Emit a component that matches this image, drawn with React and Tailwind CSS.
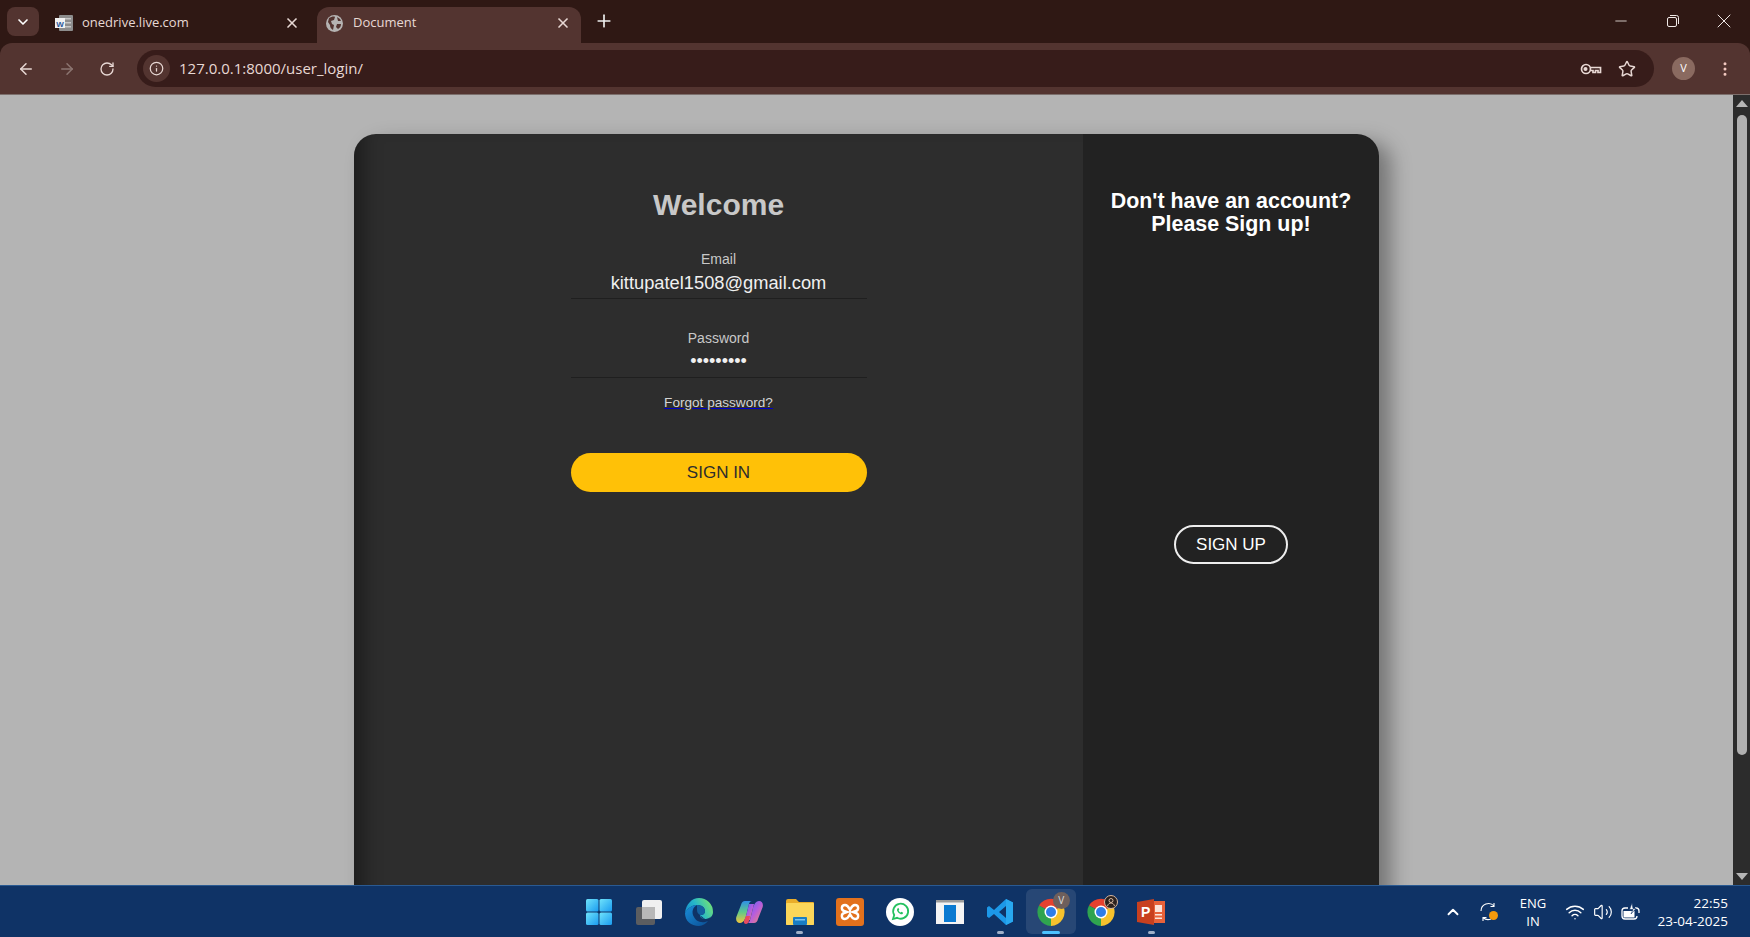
import { ArrowLeft, ArrowRight, ChevronDown, ChevronUp, EllipsisVertical, Info, Minus, Plus, RotateCw, Star, Volume2, Wifi, X } from "lucide-react";

const WindowsIcon = () => (
  <svg width="28" height="28" viewBox="0 0 28 28">
    <defs>
      <linearGradient id="win" x1="0" y1="0" x2="1" y2="1">
        <stop offset="0" stopColor="#6fe3fb" />
        <stop offset="1" stopColor="#1a9cf0" />
      </linearGradient>
    </defs>
    <rect x="1" y="1" width="12.500" height="12.500" rx="1.500" fill="url(#win)" />
    <rect x="14.500" y="1" width="12.500" height="12.500" rx="1.500" fill="url(#win)" />
    <rect x="1" y="14.500" width="12.500" height="12.500" rx="1.500" fill="url(#win)" />
    <rect x="14.500" y="14.500" width="12.500" height="12.500" rx="1.500" fill="url(#win)" />
  </svg>
);

const TaskViewIcon = () => (
  <svg width="28" height="28" viewBox="0 0 28 28">
    <rect x="1" y="9" width="19" height="18" rx="2" fill="#5b5d60" />
    <rect x="7" y="2" width="20" height="19" rx="2" fill="#f0f0f0" />
    <rect x="7" y="9" width="13" height="12" fill="#b8b8b8" />
  </svg>
);

const EdgeIcon = () => (
  <svg width="28" height="28" viewBox="0 0 28 28">
    <defs>
      <linearGradient id="edgeTop" x1="0" y1="0.800" x2="1" y2="0.400">
        <stop offset="0" stopColor="#1288d0" />
        <stop offset="0.500" stopColor="#27b8c8" />
        <stop offset="1" stopColor="#6fe078" />
      </linearGradient>
      <linearGradient id="edgeLow" x1="0" y1="0" x2="1" y2="1">
        <stop offset="0" stopColor="#1a8fdb" />
        <stop offset="1" stopColor="#0b4f94" />
      </linearGradient>
    </defs>
    <path d="M14 0a14 14 0 0 1 14 14c0 4-3 7-7 7-3 0-6-1-6-4 3 0 5-1 5-4 0-4-4-6-8-6-5 0-9 3-12 8C1 6 7 0 14 0z" fill="url(#edgeTop)" />
    <path d="M0 15C3 10 7 7 12 7c-4 2-6 7-3 12 2 4 7 7 14 4a14 14 0 0 1-9 5C6 28 0 23 0 15z" fill="url(#edgeLow)" />
    <path d="M12 7c4 0 8 2 8 6 0 3-2 4-5 4-2-1-3-3-3-5 0-2 0-3 0-5z" fill="#14609f" />
    <path d="M15 17c2 2 5 4 8 6l3-5c-1 2-3 3-5 3-3 0-5-1-6-4z" fill="#0f3366" />
  </svg>
);

const CopilotIcon = () => (
  <svg width="27" height="26" viewBox="0 0 27 26">
    <defs>
      <linearGradient id="copLeft" x1="0" y1="0" x2="0" y2="1">
        <stop offset="0" stopColor="#2f8fe8" />
        <stop offset="0.500" stopColor="#5ec98a" />
        <stop offset="1" stopColor="#f2c53a" />
      </linearGradient>
      <linearGradient id="copRight" x1="0" y1="0" x2="1" y2="1">
        <stop offset="0" stopColor="#4a6cf0" />
        <stop offset="0.500" stopColor="#b45ce0" />
        <stop offset="1" stopColor="#f98a6c" />
      </linearGradient>
    </defs>
    <path d="M9 2h7c-1.500 0-2.500 1-3 3l-3 12c-.7 3-2.500 7-6 7-3 0-4.500-2.500-3.700-6L5 6c.6-2.500 2-4 4-4z" fill="url(#copLeft)" />
    <path d="M18 24h-7c1.500 0 2.500-1 3-3l3-12c.7-3 2.500-7 6-7 3 0 4.500 2.500 3.700 6L22 20c-.6 2.500-2 4-4 4z" fill="url(#copRight)" />
    <path d="M13 5h5l-4 16H9z" fill="url(#copRight)" />
    <path d="M10 17h4l-1 5c-.5 2-2 3-3 3-1.500 0-2.500-1-2-3z" fill="#e84a5f" />
  </svg>
);

const FolderIcon = () => (
  <svg width="30" height="28" viewBox="0 0 30 28">
    <path d="M1 3a2 2 0 0 1 2-2h8l3 3h14a1 1 0 0 1 1 1v21a1 1 0 0 1-1 1H2a1 1 0 0 1-1-1z" fill="#e9ad2a" />
    <rect x="1" y="5" width="28" height="22" rx="1" fill="#fbd65a" />
    <rect x="8" y="19" width="14" height="8" rx="1" fill="#1a7dc4" />
    <rect x="10" y="21" width="10" height="1.500" fill="#7cc4ef" />
  </svg>
);

const XamppIcon = () => (
  <svg width="28" height="28" viewBox="0 0 28 28">
    <rect width="28" height="28" rx="3" fill="#e2711d" />
    <path d="M9 7c-4 0-4 5-1 6l3 1-3 1c-3 1-3 6 1 6 3 0 4-3 5-5 1 2 2 5 5 5 4 0 4-5 1-6l-3-1 3-1c3-1 3-6-1-6-3 0-4 3-5 5-1-2-2-5-5-5z" fill="none" stroke="#fff" strokeWidth="2.400" />
  </svg>
);

const WhatsappIcon = () => (
  <svg width="28" height="28" viewBox="0 0 28 28">
    <circle cx="14" cy="14" r="14" fill="#fff" />
    <path d="M7 21l1.200-4a7.500 7.500 0 1 1 2.900 2.800z" fill="none" stroke="#25c15f" strokeWidth="1.800" />
    <path d="M11.500 10.500c-1 1-.5 2.800 1 4.200s3.200 2 4.200 1l.5-1-1.800-1-.8.7c-.8-.3-1.700-1.200-2-2l.7-.8-1-1.800z" fill="#25c15f" />
  </svg>
);

const StoreIcon = () => (
  <svg width="28" height="24" viewBox="0 0 28 24">
    <rect width="28" height="24" fill="#f4f4f4" />
    <rect width="28" height="2.500" fill="#9b9b9b" />
    <rect x="8" y="5" width="12" height="17" fill="#0b7ad1" />
  </svg>
);

const VscodeIcon = () => (
  <svg width="28" height="28" viewBox="0 0 28 28">
    <path d="M20 1l7 3.500v19L20 27 8 16l-5 4-2-1.500V9.500L3 8l5 4zM20 8l-7 6 7 6z" fill="#1c98e8" />
    <path d="M20 1l7 3.500v19L20 27z" fill="#28a8f0" />
  </svg>
);

const ChromeIcon = () => (
  <svg width="28" height="28" viewBox="0 0 28 28">
    <path d="M14 14L2 7.500A14 14 0 0 1 26 7.500z" fill="#e5412f" />
    <path d="M14 14L26 7.500A14 14 0 0 1 14 28z" fill="#f6c22d" />
    <path d="M14 14L14 28A14 14 0 0 1 2 7.500z" fill="#2fa44f" />
    <circle cx="14" cy="14" r="6.500" fill="#fff" />
    <circle cx="14" cy="14" r="5" fill="#2f7de8" />
  </svg>
);

const ChromeProfileIcon = () => (
  <span className="relative flex">
    <ChromeIcon />
    <svg className="absolute -top-[3px] -right-[3px]" width="14" height="14" viewBox="0 0 14 14" fill="none" stroke="#d8b8a0" strokeWidth="1">
      <circle cx="7" cy="7" r="6.500" fill="#2a211e" />
      <circle cx="7" cy="5.500" r="2" />
      <path d="M3.500 11c.5-2 2-3 3.500-3s3 1 3.500 3" />
    </svg>
  </span>
);

const PowerpointIcon = () => (
  <svg width="28" height="28" viewBox="0 0 28 28">
    <rect x="12" y="3" width="16" height="22" fill="#e8623a" />
    <rect x="18" y="7" width="7" height="7" fill="#fbe3da" />
    <rect x="18" y="16" width="7" height="1.500" fill="#fbe3da" />
    <rect x="18" y="19.500" width="7" height="1.500" fill="#fbe3da" />
    <path d="M0 4l17-3v26L0 24z" fill="#c8401f" />
    <text x="4" y="19" fontSize="14" fontWeight="700" fill="#fff" fontFamily="Liberation Sans, sans-serif">P</text>
  </svg>
);

const WordFavicon = () => (
  <svg width="18" height="16" viewBox="0 0 18 16">
    <rect x="4" y="0" width="14" height="16" rx="1" fill="#8d8d8d" />
    <rect x="10" y="3" width="6" height="1.500" fill="#c8c8c8" />
    <rect x="10" y="7" width="6" height="1.500" fill="#c8c8c8" />
    <rect x="10" y="11" width="6" height="1.500" fill="#c8c8c8" />
    <rect x="0" y="3" width="10" height="10" fill="#f2f2f2" />
    <text x="5" y="11.500" fontSize="8" fontWeight="700" textAnchor="middle" fill="#2b579a" fontFamily="Liberation Sans, sans-serif">W</text>
  </svg>
);

const GlobeFavicon = () => (
  <svg width="17" height="17" viewBox="0 0 17 17">
    <circle cx="8.500" cy="8.500" r="8.500" fill="#b5b3b2" />
    <path d="M3 3c2-1 5-2 6-1l-1 3-3 1 1 3 2 1-1 5c-2-1-3-3-3-5L2 7z" fill="#533430" />
    <path d="M11 9h4c0 2-1 4-3 5l-2-2z" fill="#533430" />
    <path d="M11 2l3 2 1 2-3 0z" fill="#533430" />
  </svg>
);

const KeyIcon = () => (
  <svg width="22" height="14" viewBox="0 0 22 14" fill="none" stroke="currentColor" strokeWidth="1.700">
    <circle cx="6" cy="7" r="4.500" />
    <circle cx="5.500" cy="7" r="1.200" fill="currentColor" />
    <path d="M10.500 5.500H20.500V10.500H18V8.500H15.500V10.500H13V8.500H10.500" />
  </svg>
);

const RestoreIcon = () => (
  <svg width="12" height="12" viewBox="0 0 12 12" fill="none" stroke="currentColor" strokeWidth="1">
    <rect x="0.500" y="2.500" width="9" height="9" rx="1.500" />
    <path d="M3 0.500h6.500a2 2 0 0 1 2 2V9" />
  </svg>
);

const SyncIcon = () => (
  <svg width="20" height="20" viewBox="0 0 20 20" fill="none" stroke="#fff" strokeWidth="1.100">
    <path d="M2 9a7.500 7.500 0 0 1 13-5M15 1v3.500h-3.500M12 17a7.500 7.500 0 0 1-8-1.500M4 19v-3.500h3.500" />
    <circle cx="14.500" cy="13.500" r="4.500" fill="#f59a0c" stroke="none" />
  </svg>
);

const BatteryIcon = () => (
  <svg width="20" height="18" viewBox="0 0 20 18" fill="none" stroke="#fff" strokeWidth="1.300">
    <path d="M7 5H4a3 3 0 0 0-3 3v5a3 3 0 0 0 3 3h9a3 3 0 0 0 3-3" />
    <path d="M14 5h1a3 3 0 0 1 3 3v2" />
    <rect x="2.500" y="8" width="11" height="6.500" fill="#fff" stroke="none" />
    <path d="M11 0L8.500 6.500H12L10 11L15 5.500H12z" fill="#fff" stroke="#0f3366" strokeWidth="0.600" />
  </svg>
);

const taskbarApps = [
  { id: "windows", icon: <WindowsIcon /> },
  { id: "taskview", icon: <TaskViewIcon /> },
  { id: "edge", icon: <EdgeIcon /> },
  { id: "copilot", icon: <CopilotIcon /> },
  { id: "files", icon: <FolderIcon />, open: true },
  { id: "xampp", icon: <XamppIcon /> },
  { id: "whatsapp", icon: <WhatsappIcon /> },
  { id: "store", icon: <StoreIcon /> },
  { id: "vscode", icon: <VscodeIcon />, open: true },
  { id: "chrome", icon: <ChromeIcon />, active: true },
  { id: "chrome2", icon: <ChromeProfileIcon /> },
  { id: "powerpoint", icon: <PowerpointIcon />, open: true },
];

const TabStrip = () => (
  <div className="h-[43px] bg-[#2f1814] flex items-end pl-[7px] text-[13px] text-[#e8d8d4] font-['Open_Sans',sans-serif]">
    <button className="w-8 h-[29px] mb-[7px] rounded-lg bg-[#533430] flex items-center justify-center">
      <ChevronDown className="size-4 text-white" strokeWidth={2.500} />
    </button>
    <div className="w-[278px] h-9 flex items-center pl-[16px] pr-[17px] pb-[4px] gap-[9px]">
      <WordFavicon />
      <span className="flex-1">onedrive.live.com</span>
      <X className="size-4" strokeWidth={2.500} />
    </div>
    <div className="w-[264px] h-9 bg-[#533430] rounded-t-xl flex items-center pl-[9px] pr-[10px] pb-[4px] gap-[10px]">
      <GlobeFavicon />
      <span className="flex-1">Document</span>
      <X className="size-4" strokeWidth={2.500} />
    </div>
    <Plus className="size-5 mb-[12px] ml-[13px] text-[#eee]" />
    <div className="ml-auto flex items-center h-full pb-[1px] text-[#f0e8e6]">
      <span className="w-[51px] flex justify-center"><Minus className="size-[18px]" strokeWidth={1.100} /></span>
      <span className="w-[53px] flex justify-center"><RestoreIcon /></span>
      <span className="w-[52px] mr-[-1px] pr-[2px] flex justify-center"><X className="size-6" strokeWidth={1} /></span>
    </div>
  </div>
);

const Toolbar = () => (
  <div className="bg-[#2f1814]">
    <div className="h-[52px] bg-[#533430] rounded-t-xl border-b border-[#7c6f6c] flex items-center pl-[17px] text-[#e8d8d4] font-['Open_Sans',sans-serif]">
      <ArrowLeft className="size-[18px]" />
      <ArrowRight className="size-[18px] ml-[23px] text-[#8c7571]" />
      <RotateCw className="size-4 ml-[23px]" />
      <div className="w-[1517px] h-[37px] ml-[22px] rounded-full bg-[#371c1a] flex items-center pl-[6px] pr-[18px]">
        <span className="size-[27px] rounded-full bg-[#533430] flex items-center justify-center">
          <Info className="size-[15px]" />
        </span>
        <span className="ml-[9px] text-[15px] flex-1">127.0.0.1:8000/user_login/</span>
        <KeyIcon />
        <Star className="size-[18px] ml-[16px]" />
      </div>
      <span className="size-[23px] ml-[18px] rounded-full bg-[#8a6a60] text-white text-[11px] flex items-center justify-center">V</span>
      <EllipsisVertical className="size-[18px] ml-[21px] text-[#f2c9c0]" />
    </div>
  </div>
);

const Scrollbar = () => (
  <div className="w-[17px] h-full bg-[#2c2c2c] flex flex-col items-center">
    <span className="mt-[5px] w-0 h-0 border-x-[6px] border-x-transparent border-b-[7px] border-b-[#b5b5b5]" />
    <span className="mt-[8px] w-[10px] h-[640px] rounded-full bg-[#b0b0b0]" />
    <span className="mt-auto mb-[5px] w-0 h-0 border-x-[6px] border-x-transparent border-t-[7px] border-t-[#b5b5b5]" />
  </div>
);

const LoginPanel = () => (
  <div className="w-[729px] bg-[#2d2d2d] pt-[53px] flex flex-col items-center shadow-[inset_22px_0_18px_-12px_rgba(0,0,0,0.35)]">
    <h1 className="text-[30px] leading-9 font-bold text-[#c8c8c8]">Welcome</h1>
    <form className="w-[296px] mt-[28px] flex flex-col items-center">
      <label htmlFor="email" className="text-sm leading-4 text-[#c8c8c8]">Email</label>
      <input
        id="email"
        defaultValue="kittupatel1508@gmail.com"
        className="w-full h-[32px] bg-transparent border-b border-[#1f1f1f] text-center text-[18.300px] text-[#f0f0f0] outline-none"
      />
      <label htmlFor="password" className="mt-[31px] text-sm leading-4 text-[#c8c8c8]">Password</label>
      <input
        id="password"
        type="password"
        defaultValue="123456789"
        className="w-full h-[32px] bg-transparent border-b border-[#1f1f1f] text-center text-lg text-[#f0f0f0] outline-none"
      />
      <a href="#" className="mt-[17px] text-[13.600px] leading-4 text-[#d4d4d4] underline decoration-[#0000c8]">Forgot password?</a>
      <button type="button" className="w-full h-[39px] mt-[42px] rounded-full bg-[#ffc107] text-[17px] text-[#2d2d2d]">SIGN IN</button>
    </form>
  </div>
);

const SignupPanel = () => (
  <div className="flex-1 bg-[#222222] pt-[56px] flex flex-col items-center">
    <h2 className="text-[21.400px] leading-[23px] font-bold text-white text-center">Don't have an account?<br />Please Sign up!</h2>
    <button type="button" className="w-[114px] h-[39px] mt-[289px] rounded-full border-2 border-[#eeeeee] text-[17px] text-white">SIGN UP</button>
  </div>
);

const Taskbar = () => (
  <div className="h-[52px] border-t border-[#2a5a92] bg-[#0f3366] grid grid-cols-[1fr_auto_1fr] items-center text-white font-['Open_Sans',sans-serif]">
    <div />
    <div className="flex">
      {taskbarApps.map((app) => (
        <div key={app.id} className={`relative w-[50.200px] h-[45px] flex items-center justify-center rounded-md ${app.active ? "bg-white/10" : ""}`}>
          {app.icon}
          {app.open && <span className="absolute bottom-0 w-[7px] h-[3px] rounded-full bg-[#9fb0c8]" />}
          {app.active && <span className="absolute bottom-0 w-[18px] h-[3px] rounded-full bg-[#4cc2ff]" />}
          {app.active && (
            <span className="absolute top-[3px] right-[6px] size-[17px] rounded-full bg-[#6e5f5c] text-[10px] leading-[17px] text-center text-[#ddd]">V</span>
          )}
        </div>
      ))}
    </div>
    <div className="flex items-center justify-end pr-[22px]">
      <ChevronUp className="size-[18px]" strokeWidth={2.500} />
      <span className="ml-[17px]"><SyncIcon /></span>
      <div className="ml-[15px] w-[38px] text-center text-[13px] leading-[18px]">ENG<br />IN</div>
      <Wifi className="size-5 ml-[13px]" strokeWidth={1.800} />
      <Volume2 className="size-5 ml-[8px]" strokeWidth={1.400} />
      <span className="ml-[8px]"><BatteryIcon /></span>
      <div className="ml-[15px] w-[72px] text-right text-[13.500px] leading-[18px] whitespace-nowrap">22:55<br />23-04-2025</div>
    </div>
  </div>
);

export default function App() {
  return (
    <div className="h-[937px] flex flex-col overflow-hidden font-['Liberation_Sans',Arial,sans-serif]">
      <TabStrip />
      <Toolbar />
      <div className="flex-1 min-h-0 flex bg-[#b4b4b4]">
        <main className="flex-1 overflow-hidden flex justify-center pt-[39px]">
          <div className="w-[1025px] h-[900px] shrink-0 flex rounded-[22px] overflow-hidden shadow-[12px_8px_20px_rgba(0,0,0,0.35)]">
            <LoginPanel />
            <SignupPanel />
          </div>
        </main>
        <Scrollbar />
      </div>
      <Taskbar />
    </div>
  );
}
